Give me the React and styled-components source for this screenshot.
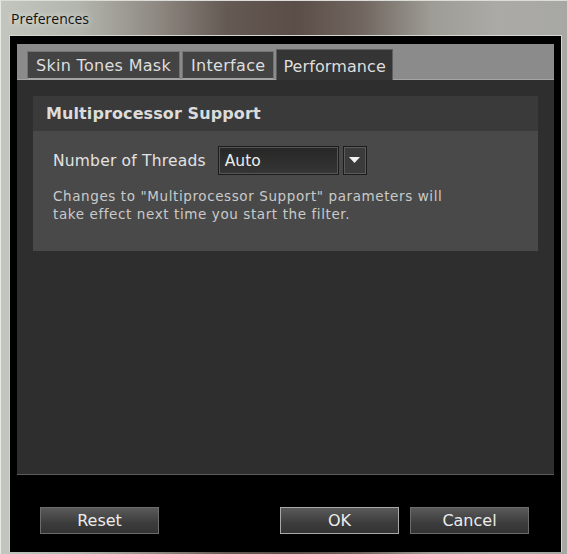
import React from 'react'
import styled, { createGlobalStyle } from 'styled-components'

const Global = createGlobalStyle`
  html, body {
    margin: 0;
    padding: 0;
    background: #a9aaa5;
  }
`

const Window = styled.div`
  width: 567px;
  height: 554px;
  box-sizing: border-box;
  display: flex;
  flex-direction: column;
  padding: 0 5px 2px 8px;
  border-left: 1px solid #e6e8e2;
  border-top: 1px solid #dcdcd8;
  background: linear-gradient(90deg, #c2c6be 0%, #b2b5ad 14%, #8d8780 28%, #645953 40%, #5b4d47 52%, #716760 64%, #9e9c96 76%, #abaaa6 88%, #a7a7a3 100%);
  font-family: 'DejaVu Sans', 'Liberation Sans', sans-serif;
`

const TitleBar = styled.div`
  height: 34px;
  display: flex;
  align-items: center;
  padding-left: 2px;
  font-family: 'Open Sans', 'Noto Sans', sans-serif;
  font-size: 14px;
  color: #111;
  text-shadow: 0 0 6px rgba(255, 255, 255, 0.8);
`

const Client = styled.div`
  flex: 1;
  display: flex;
  flex-direction: column;
  background: #000;
  border: 1px solid #d4d4d0;
  border-bottom: none;
  padding: 8px 7px 17px 7px;
`

const TabWidget = styled.div`
  height: 431px;
  display: flex;
  flex-direction: column;
`

const TabStrip = styled.div`
  height: 36px;
  box-sizing: border-box;
  display: flex;
  align-items: flex-end;
  gap: 2px;
  padding-left: 10px;
  background: #8b8b8b;
  border-bottom: 1px solid #a4a4a4;
`

const Tab = styled.div`
  box-sizing: border-box;
  height: ${({ active }) => (active ? '31px' : '28px')};
  margin-bottom: ${({ active }) => (active ? '-1px' : '0')};
  padding: ${({ active }) => (active ? '2px 6px 0' : '1px 8px 0')};
  display: flex;
  align-items: center;
  background: ${({ active }) => (active ? '#353535' : '#434343')};
  border: 1px solid ${({ active }) => (active ? '#5e5e5e' : '#737373')};
  border-bottom: ${({ active }) => (active ? 'none' : '1px solid #a4a4a4')};
  font-size: 16px;
  color: #dedede;
  letter-spacing: ${({ active }) => (active ? '0.1px' : '0.3px')};
`

const Panel = styled.div`
  flex: 1;
  background: #2e2e2e;
  border-bottom: 1px solid #5a5a5a;
  padding: 16px 16px 0;
`

const Group = styled.div`
  display: flex;
  flex-direction: column;
`

const GroupHeader = styled.div`
  height: 35px;
  display: flex;
  align-items: center;
  padding-left: 13px;
  background: #3a3a3a;
  font-weight: bold;
  font-size: 16px;
  color: #dcdcdc;
  letter-spacing: 0.1px;
`

const GroupBody = styled.div`
  background: #494949;
  height: 120px;
  box-sizing: border-box;
  padding: 15px 21px 0 20px;
`

const Row = styled.div`
  display: flex;
  align-items: center;
  gap: 12px;
`

const Label = styled.span`
  font-size: 15.5px;
  color: #e2e2e2;
  letter-spacing: 0.2px;
`

const Select = styled.div`
  width: 121px;
  height: 29px;
  box-sizing: border-box;
  display: flex;
  align-items: center;
  padding-left: 6px;
  background: linear-gradient(#262626, #363636);
  border: 1px solid #1c1c1c;
  box-shadow: inset 0 0 0 1px #555;
  font-size: 15.5px;
  color: #ececec;
`

const ArrowButton = styled.div`
  width: 24px;
  height: 29px;
  margin-left: -8px;
  box-sizing: border-box;
  display: flex;
  align-items: center;
  justify-content: center;
  background: #3b3b3b;
  border: 1px solid #1c1c1c;
  box-shadow: inset 0 0 0 1px #5a5a5a;
`

const Note = styled.p`
  margin: 12px 0 0;
  font-size: 13.5px;
  line-height: 18px;
  color: #cacaca;
  letter-spacing: 0.6px;
`

const ButtonRow = styled.div`
  margin-top: 32px;
  display: flex;
  padding: 0 25px 0 23px;
`

const Button = styled.button`
  width: 119px;
  height: 27px;
  margin-left: ${({ gap }) => gap || 0}px;
  padding: 0;
  background: linear-gradient(#5a5a5a, #3c3c3c 60%, #333);
  border: 1px solid ${({ focused }) => (focused ? '#a8a8a8' : '#6c6c6c')};
  color: #ececec;
  font-family: 'DejaVu Sans', 'Liberation Sans', sans-serif;
  font-size: 16px;
`

export default function App() {
  return (
    <>
      <Global />
      <Window>
        <TitleBar>Preferences</TitleBar>
        <Client>
          <TabWidget>
            <TabStrip>
              <Tab>Skin Tones Mask</Tab>
              <Tab>Interface</Tab>
              <Tab active>Performance</Tab>
            </TabStrip>
            <Panel>
              <Group>
                <GroupHeader>Multiprocessor Support</GroupHeader>
                <GroupBody>
                  <Row>
                    <Label>Number of Threads</Label>
                    <Select>Auto</Select>
                    <ArrowButton>
                      <svg width="11" height="7" viewBox="0 0 11 7">
                        <path d="M0 0 L11 0 L5.5 6 Z" fill="#f2f2f2" />
                      </svg>
                    </ArrowButton>
                  </Row>
                  <Note>
                    Changes to "Multiprocessor Support" parameters will
                    <br />
                    take effect next time you start the filter.
                  </Note>
                </GroupBody>
              </Group>
            </Panel>
          </TabWidget>
          <ButtonRow>
            <Button>Reset</Button>
            <Button gap={121} focused>OK</Button>
            <Button gap={11}>Cancel</Button>
          </ButtonRow>
        </Client>
      </Window>
    </>
  )
}
